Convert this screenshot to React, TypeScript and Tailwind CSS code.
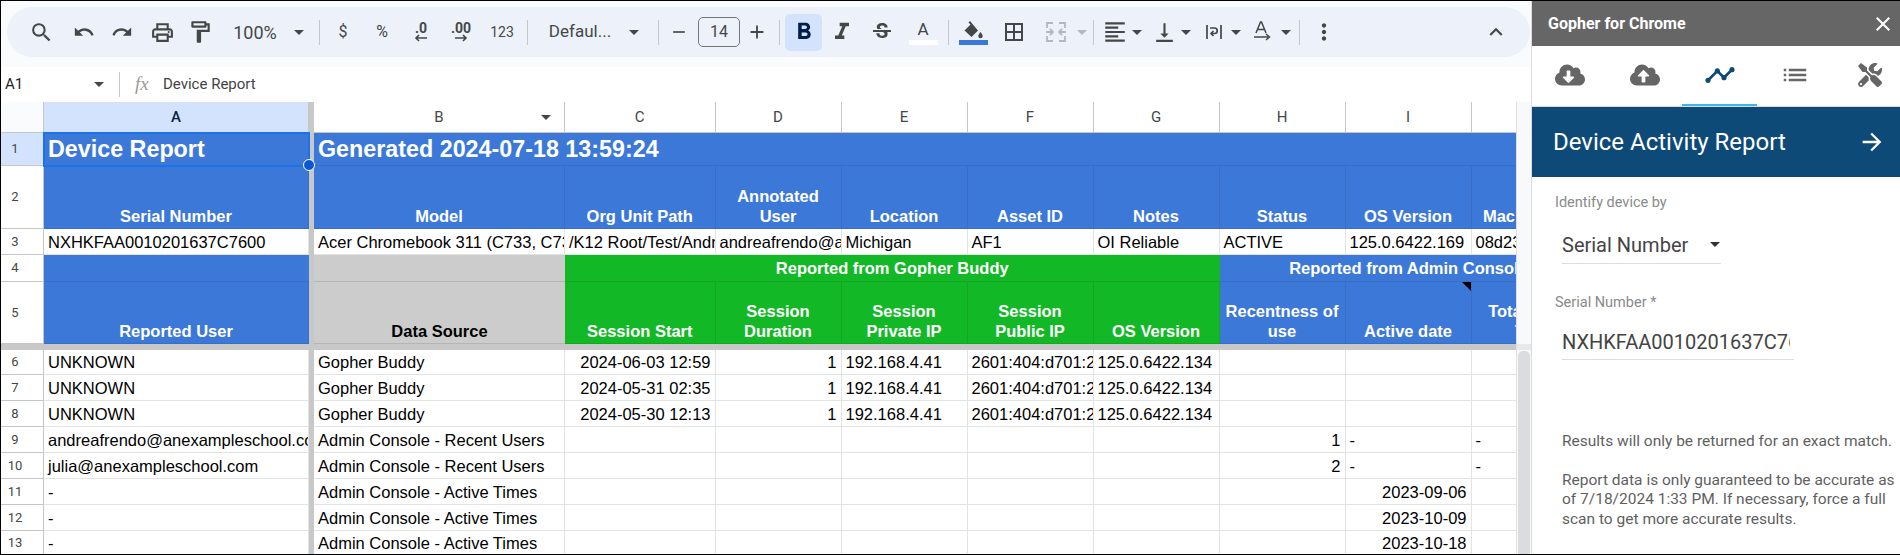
import React from "react";
import {
  MdSearch, MdUndo, MdRedo, MdOutlinePrint, MdOutlineFormatPaint, MdFormatBold, MdFormatItalic,
  MdStrikethroughS, MdBorderAll, MdFormatAlignLeft, MdVerticalAlignBottom, MdMoreVert, MdExpandLess,
  MdAdd, MdRemove, MdArrowForward, MdClose, MdTimeline, MdList, MdArrowDropDown,
} from "react-icons/md";
import { FaCloudDownloadAlt, FaCloudUploadAlt, FaTools } from "react-icons/fa";

const Slot = ({ className = "", children }: { className?: string; children?: React.ReactNode }) => (
  <div className={`flex shrink-0 items-center justify-center ${className}`}>{children}</div>
);
const Sep = ({ className = "" }: { className?: string }) => <div className={`h-[25px] w-px shrink-0 bg-[#c7c7c7] ${className}`} />;
const Caret = ({ className = "", light = false }: { className?: string; light?: boolean }) => (
  <div className={`h-0 w-0 shrink-0 border-x-[5px] border-t-[5px] border-x-transparent ${light ? "border-t-[#b5b8bb]" : "border-t-[#444746]"} ${className}`} />
);

const Toolbar = () => (
  <div className="ml-[6px] mt-[6px] flex h-[50px] w-[1523px] items-center rounded-[25px] bg-[#edf2fa] text-[#444746] font-['Roboto',sans-serif]">
    <Slot className="ml-[19px] w-[30px]"><MdSearch size={25} /></Slot>
    <Slot className="ml-[13px] w-[30px]"><MdUndo size={22} /></Slot>
    <Slot className="ml-[8px] w-[30px]"><MdRedo size={22} /></Slot>
    <Slot className="ml-[10px] w-[30px]"><MdOutlinePrint size={25} /></Slot>
    <Slot className="ml-[8px] w-[30px]"><MdOutlineFormatPaint size={26} /></Slot>
    <Slot className="ml-[17px] w-[46px] text-[18px]">100%</Slot>
    <Caret className="ml-[16px]" />
    <Sep className="ml-[15px]" />
    <Slot className="ml-[11px] w-[24px] text-[16px]">$</Slot>
    <Slot className="ml-[15px] w-[24px] text-[16px]">%</Slot>
    <Slot className="ml-[12px] w-[30px]">
      <div className="flex flex-col items-center text-[14px] font-bold leading-[12px]">
        <span>.0</span>
        <svg width="14" height="8" viewBox="0 0 14 8"><path d="M13 4H2M5 1 2 4l3 3" fill="none" stroke="#444746" strokeWidth="1.6" /></svg>
      </div>
    </Slot>
    <Slot className="ml-[10px] w-[30px]">
      <div className="flex flex-col items-center text-[14px] font-bold leading-[12px]">
        <span>.00</span>
        <svg width="14" height="8" viewBox="0 0 14 8"><path d="M1 4h11M9 1l3 3-3 3" fill="none" stroke="#444746" strokeWidth="1.6" /></svg>
      </div>
    </Slot>
    <Slot className="ml-[11px] w-[30px] text-[14px]">123</Slot>
    <Sep className="ml-[10px]" />
    <Slot className="ml-[19px] w-[66px] text-[17px]">Defaul...</Slot>
    <Caret className="ml-[16px]" />
    <Sep className="ml-[19px]" />
    <Slot className="ml-[8px] w-[24px]"><MdRemove size={20} /></Slot>
    <Slot className="ml-[7px] h-[30px] w-[42px] rounded-[5px] border border-[#747775] text-[16px]">14</Slot>
    <Slot className="ml-[5px] w-[24px]"><MdAdd size={22} /></Slot>
    <Sep className="ml-[10px]" />
    <Slot className="ml-[5px] h-[37px] w-[37px] rounded-[5px] bg-[#d3e3fd] text-[#041e49]"><MdFormatBold size={28} /></Slot>
    <Slot className="ml-[5px] w-[30px]"><MdFormatItalic size={28} /></Slot>
    <Slot className="ml-[10px] w-[30px]"><MdStrikethroughS size={24} /></Slot>
    <Slot className="ml-[11px] w-[30px]">
      <div className="flex flex-col items-center text-[17px] leading-[20px]">
        <span>A</span>
        <div className="mt-[1px] h-[5px] w-[29px] bg-white" />
      </div>
    </Slot>
    <Sep className="ml-[10px]" />
    <Slot className="ml-[9px] w-[30px]">
      <div className="flex flex-col items-center">
        <svg width="22" height="19" viewBox="0 0 22 19"><path d="M8 1 6.5 2.5 8.5 4.5 2.5 10.5 9.5 17 16 10.5Z" fill="#444746" /><path d="M18.5 12c1.5 2 2.2 3 2.2 4a2.2 2.2 0 0 1-4.4 0c0-1 .7-2 2.2-4Z" fill="#444746" /></svg>
        <div className="mt-[1px] h-[5px] w-[29px] bg-[#3c78d8]" />
      </div>
    </Slot>
    <Slot className="ml-[11px] w-[30px]"><MdBorderAll size={24} /></Slot>
    <Slot className="ml-[12px] w-[30px]">
      <svg width="22" height="22" viewBox="0 0 22 22" fill="none" stroke="#b5b8bb" strokeWidth="1.8">
        <path d="M2 7V2h6M14 2h6v5M2 15v5h6M14 20h6v-5M1 11h7M5 8l3 3-3 3M21 11h-7M17 8l-3 3 3 3" />
      </svg>
    </Slot>
    <Caret light className="ml-[6px]" />
    <Sep className="ml-[6px]" />
    <Slot className="ml-[6px] w-[30px]"><MdFormatAlignLeft size={26} /></Slot>
    <Caret className="ml-[2px]" />
    <Slot className="ml-[7px] w-[30px]"><MdVerticalAlignBottom size={25} /></Slot>
    <Caret className="ml-[2px]" />
    <Slot className="ml-[8px] w-[30px]">
      <svg width="18" height="18" viewBox="0 0 18 18" fill="none" stroke="#444746" strokeWidth="1.7">
        <path d="M2 2v14M16 2v14M5 5h4.5a2.6 2.6 0 0 1 0 5.5H6M8.5 8 6 10.5 8.5 13" />
      </svg>
    </Slot>
    <Caret className="ml-[2px]" />
    <Slot className="ml-[7px] w-[30px]">
      <svg width="20" height="22" viewBox="0 0 20 22" fill="none" stroke="#444746" strokeWidth="1.5">
        <path d="M3 12 7.5 1h1L13 12M4.5 8.5h7M1 16h14M13 13l3.5 3-3.5 3" />
      </svg>
    </Slot>
    <Caret className="ml-[3px]" />
    <Sep className="ml-[8px]" />
    <Slot className="ml-[9px] w-[30px]"><MdMoreVert size={26} /></Slot>
    <Slot className="ml-auto mr-[19px] w-[30px]"><MdExpandLess size={26} /></Slot>
  </div>
);

const FormulaBar = () => (
  <div className="flex h-[35px] items-center bg-white font-['Roboto',sans-serif] text-[15px] text-[#444]">
    <span className="ml-[4px] w-[89px] text-[#1f1f1f]">A1</span>
    <Caret />
    <div className="ml-[15px] h-[25px] w-px bg-[#c7c7c7]" />
    <span className="ml-[15px] w-[28px] font-['Liberation_Serif',serif] text-[19px] italic text-[#9a9a9a]">fx</span>
    <span>Device Report</span>
  </div>
);

const cellBase = "overflow-hidden whitespace-nowrap border-r border-b border-[#e2e3e3] bg-white px-[4px] text-black flex items-center";
const L = ({ t = "" }: { t?: string }) => <div className={cellBase}>{t}</div>;
const R = ({ t = "" }: { t?: string }) => <div className={`${cellBase} justify-end`}>{t}</div>;

const blueBase = "flex items-end justify-center overflow-hidden border-r border-b border-[#3a6ec4] bg-[#3c78d8] pb-[2px] text-center font-bold leading-[20px] text-white";
const greenBase = "flex items-end justify-center overflow-hidden border-r border-b border-[#12a824] bg-[#13b826] pb-[2px] text-center font-bold leading-[20px] text-white";
const Blue = ({ children }: { children?: React.ReactNode }) => <div className={blueBase}>{children}</div>;
const Green = ({ children }: { children?: React.ReactNode }) => <div className={greenBase}>{children}</div>;

const RowNum = ({ n, active = false }: { n: number; active?: boolean }) => (
  <div className={`flex items-center justify-center border-b border-r border-[#c4c7c5] pr-[14px] font-['Roboto',sans-serif] text-[13px] text-[#444746] ${active ? "bg-[#d3e3fd]" : "bg-white"}`}>{n}</div>
);
const ColHead = ({ t, active = false, children }: { t: string; active?: boolean; children?: React.ReactNode }) => (
  <div className={`relative flex items-center justify-center border-b border-r border-[#c4c7c5] font-['Roboto',sans-serif] text-[15px] ${active ? "bg-[#d3e3fd] font-medium text-[#0b1f3f]" : "bg-white text-[#444746]"}`}>
    {t}
    {children}
  </div>
);

const dataRows: { n: number; a: string; b: string; c?: string; d?: string; e?: string; f?: string; g?: string; h?: string; i?: string; iR?: boolean; j?: string }[] = [
  { n: 6, a: "UNKNOWN", b: "Gopher Buddy", c: "2024-06-03 12:59", d: "1", e: "192.168.4.41", f: "2601:404:d701:2a00", g: "125.0.6422.134" },
  { n: 7, a: "UNKNOWN", b: "Gopher Buddy", c: "2024-05-31 02:35", d: "1", e: "192.168.4.41", f: "2601:404:d701:2a00", g: "125.0.6422.134" },
  { n: 8, a: "UNKNOWN", b: "Gopher Buddy", c: "2024-05-30 12:13", d: "1", e: "192.168.4.41", f: "2601:404:d701:2a00", g: "125.0.6422.134" },
  { n: 9, a: "andreafrendo@anexampleschool.com", b: "Admin Console - Recent Users", h: "1", i: "-", j: "-" },
  { n: 10, a: "julia@anexampleschool.com", b: "Admin Console - Recent Users", h: "2", i: "-", j: "-" },
  { n: 11, a: "-", b: "Admin Console - Active Times", i: "2023-09-06", iR: true },
  { n: 12, a: "-", b: "Admin Console - Active Times", i: "2023-10-09", iR: true },
  { n: 13, a: "-", b: "Admin Console - Active Times", i: "2023-10-18", iR: true },
];

const Sheet = () => (
  <div className="relative grid w-max grid-cols-[43px_265px_5px_251px_150.5px_repeat(7,126px)] grid-rows-[31px_33px_63px_26px_27px_62px_6px_25px_26px_26px_26px_26px_26px_26px_24px] font-['Liberation_Sans',sans-serif] text-[16.5px] leading-[20px]">
    <div className="col-start-3 row-span-full row-start-1 bg-[#c8c8c8]" />
    <div className="col-span-full row-start-7 bg-[#c8c8c8]" />

    <div className="border-b border-r border-[#c4c7c5] bg-[#f9fbfd]" />
    <ColHead t="A" active />
    <ColHead t="B">
      <div className="absolute right-[13px] top-[13px] h-0 w-0 border-x-[5px] border-t-[5px] border-x-transparent border-t-[#444746]" />
    </ColHead>
    {["C", "D", "E", "F", "G", "H", "I", "J"].map((c) => <ColHead key={c} t={c} />)}

    <RowNum n={1} active />
    <div className="relative flex items-center border-b border-[#3a6ec4] bg-[#3c78d8] pl-[4px] text-[23.3px] font-bold text-white outline-2 -outline-offset-1 outline-[#1a73e8]">
      Device Report
      <div className="absolute -bottom-[6px] -right-[6px] z-10 h-[12px] w-[12px] rounded-full border border-white bg-[#0b57d0]" />
    </div>
    <div className="col-span-9 flex items-center border-b border-[#3a6ec4] bg-[#3c78d8] pl-[4px] text-[23.3px] font-bold text-white">Generated 2024-07-18 13:59:24</div>

    <RowNum n={2} />
    <Blue>Serial Number</Blue><Blue>Model</Blue><Blue>Org Unit Path</Blue><Blue>Annotated<br />User</Blue><Blue>Location</Blue><Blue>Asset ID</Blue><Blue>Notes</Blue><Blue>Status</Blue><Blue>OS Version</Blue><Blue>Mac Address</Blue>

    <RowNum n={3} />
    <L t="NXHKFAA0010201637C7600" />
    <L t="Acer Chromebook 311 (C733, C734)" />
    <L t="/K12 Root/Test/Andrea" />
    <L t="andreafrendo@anexampleschool.com" />
    <L t="Michigan" />
    <L t="AF1" />
    <L t="OI Reliable" />
    <L t="ACTIVE" />
    <L t="125.0.6422.169" />
    <L t="08d23e5f" />

    <RowNum n={4} />
    <div className="border-b border-[#3a6ec4] bg-[#3c78d8]" />
    <div className="border-b border-[#b5b5b5] bg-[#cccccc]" />
    <div className="col-span-5 flex items-center justify-center border-b border-[#12a824] bg-[#13b826] font-bold text-white">Reported from Gopher Buddy</div>
    <div className="col-span-3 flex items-center justify-center border-b border-[#3a6ec4] bg-[#3c78d8] font-bold text-white">Reported from Admin Console</div>

    <RowNum n={5} />
    <Blue>Reported User</Blue>
    <div className="flex items-end justify-center border-b border-[#b5b5b5] bg-[#cccccc] pb-[2px] font-bold text-black">Data Source</div>
    <Green>Session Start</Green><Green>Session<br />Duration</Green><Green>Session<br />Private IP</Green><Green>Session<br />Public IP</Green><Green>OS Version</Green>
    <Blue>Recentness of<br />use</Blue>
    <div className={`${blueBase} relative`}>
      Active date
      <div className="absolute right-0 top-0 h-0 w-0 border-l-[9px] border-t-[9px] border-l-transparent border-t-black" />
    </div>
    <Blue>Total Active<br />Time</Blue>

    {dataRows.map((r) => (
      <React.Fragment key={r.n}>
        <RowNum n={r.n} />
        <L t={r.a} />
        <L t={r.b} />
        <R t={r.c} />
        <R t={r.d} />
        <L t={r.e} />
        <L t={r.f} />
        <L t={r.g} />
        <R t={r.h} />
        {r.iR ? <R t={r.i} /> : <L t={r.i} />}
        <L t={r.j} />
      </React.Fragment>
    ))}
  </div>
);

const Sidebar = () => (
  <div className="flex w-[369px] shrink-0 flex-col overflow-hidden border-l border-[#dadce0] bg-white font-['Roboto',sans-serif]">
    <div className="flex h-[45px] shrink-0 items-center justify-between bg-[#666666] pl-[16px] pr-[5px] text-[16px] font-bold text-white">
      Gopher for Chrome
      <MdClose size={24} />
    </div>
    <div className="grid h-[61px] shrink-0 grid-cols-[repeat(5,75px)] border-b border-[#dadce0]">
      <div className="flex items-center justify-center pb-[2px] text-[#666]"><FaCloudDownloadAlt size={30} /></div>
      <div className="flex items-center justify-center pb-[2px] text-[#666]"><FaCloudUploadAlt size={30} /></div>
      <div className="flex items-center justify-center border-b-2 border-[#40b4f0] text-[#0d4a78]"><MdTimeline size={32} /></div>
      <div className="flex items-center justify-center pb-[2px] text-[#666]"><MdList size={30} /></div>
      <div className="flex items-center justify-center pb-[2px] text-[#666]"><FaTools size={24} /></div>
    </div>
    <div className="flex h-[70px] shrink-0 items-center justify-between bg-[#0d4a78] pl-[21px] pr-[14px] text-[24px] text-white">
      Device Activity Report
      <MdArrowForward size={28} />
    </div>
    <div className="pl-[23px] pt-[17px] text-[14.5px] leading-[18px] text-[#8a8a8a]">Identify device by</div>
    <div className="ml-[30px] mt-[16px] flex h-[36px] w-[159px] items-center justify-between border-b border-[#dadde1] pb-[2px] pr-[1px] text-[20px] text-[#444]">
      Serial Number
      <div className="h-0 w-0 border-x-[5px] border-t-[5px] border-x-transparent border-t-[#333]" />
    </div>
    <div className="pl-[23px] pt-[30px] text-[14.5px] leading-[18px] text-[#8a8a8a]">Serial Number *</div>
    <div className="ml-[30px] mt-[12px] flex h-[36px] w-[232px] items-center border-b border-[#dadde1] text-[20px] text-[#444]">
      <span className="w-[228px] overflow-hidden whitespace-nowrap">NXHKFAA0010201637C7600</span>
    </div>
    <div className="ml-[30px] mt-[72px] w-[335px] text-[15.5px] leading-[19.5px] text-[#5f5f5f]">
      <p>Results will only be returned for an exact match.</p>
      <p className="mt-[19px]">Report data is only guaranteed to be accurate as of 7/18/2024 1:33 PM. If necessary, force a full scan to get more accurate results.</p>
    </div>
  </div>
);

export default function App() {
  return (
    <div className="flex h-[555px] w-[1900px] overflow-hidden border-y border-l border-black bg-white">
      <div className="flex w-[1530px] shrink-0 flex-col">
        <div className="h-[66px] shrink-0 bg-[#f9fbfd]">
          <Toolbar />
        </div>
        <FormulaBar />
        <div className="flex min-h-0 flex-1">
          <div className="w-[1515px] shrink-0 overflow-hidden">
            <Sheet />
          </div>
          <div className="flex w-[15px] shrink-0 flex-col border-l border-[#e0e0e0] bg-[#f8f9fa]">
            <div className="mt-[242px] h-[6px] bg-[#e8e8e8]" />
            <div className="ml-[1px] mt-[1px] w-[12px] flex-1 rounded-t-[5px] bg-[#dadce0]" />
          </div>
        </div>
      </div>
      <Sidebar />
    </div>
  );
}
